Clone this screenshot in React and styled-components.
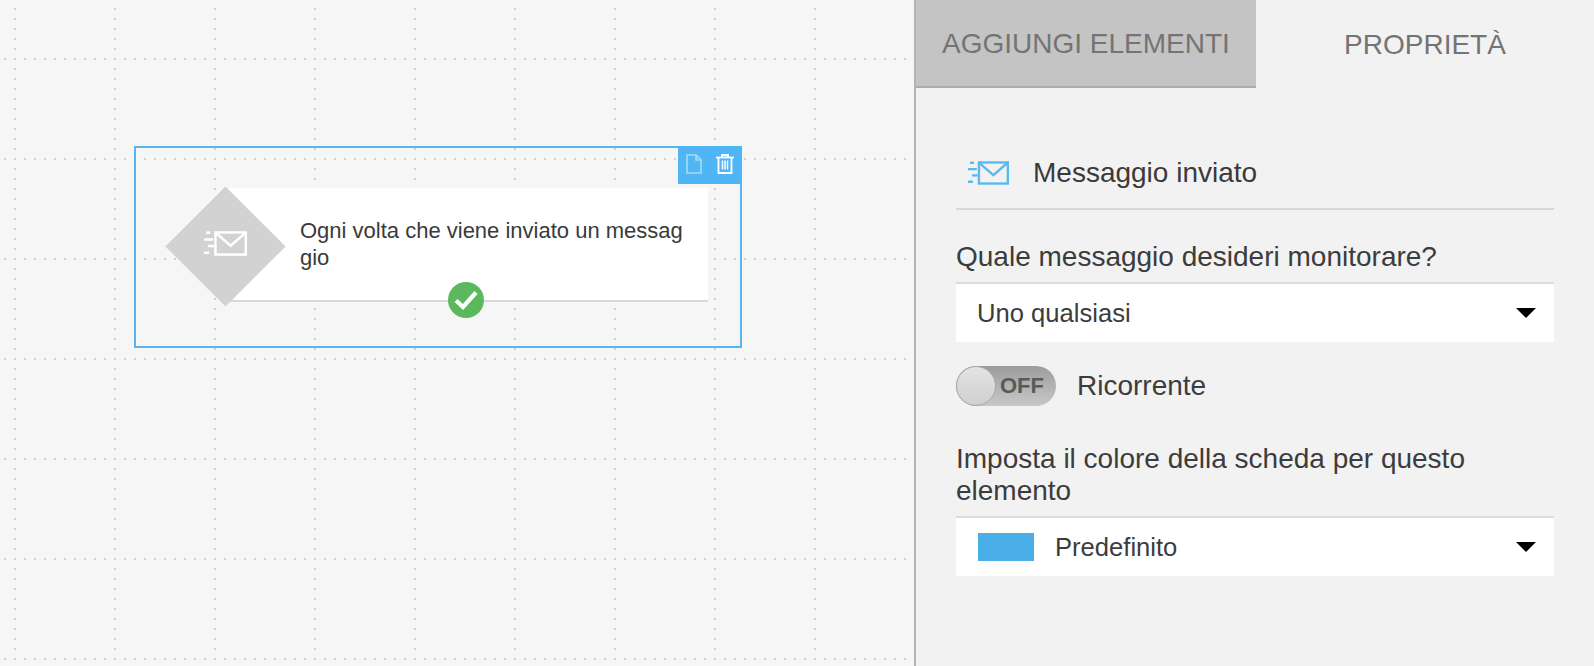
import React from 'react';
import styled, { createGlobalStyle } from 'styled-components';

const GlobalStyle = createGlobalStyle`
  html, body {
    margin: 0;
    padding: 0;
    height: 100%;
    overflow: hidden;
    font-family: "Liberation Sans", Arial, sans-serif;
    color: #3c3c3c;
  }
  #root {
    height: 100%;
  }
`;

const Page = styled.div`
  display: flex;
  height: 666px;
  width: 1594px;
`;

const Canvas = styled.div`
  position: relative;
  width: 914px;
  flex: none;
  background-color: #f6f6f6;
  overflow: hidden;
`;

// dotted grid: one set of bars every 100px, cut into dots by a 10px mask
const GridColumns = styled.div`
  position: absolute;
  inset: 0;
  background-image: repeating-linear-gradient(to right, transparent 0 14px, #d0d0d0 14px 16px, transparent 16px 100px);
  mask-image: repeating-linear-gradient(to bottom, transparent 0 8px, #000 8px 10px);
`;

const GridRows = styled.div`
  position: absolute;
  inset: 0;
  background-image: repeating-linear-gradient(to bottom, transparent 0 58px, #d0d0d0 58px 60px, transparent 60px 100px);
  background-position: 0 0;
  mask-image: repeating-linear-gradient(to right, transparent 0 4px, #000 4px 6px, transparent 6px 10px);
`;

const Node = styled.div`
  position: absolute;
  left: 134px;
  top: 146px;
  width: 608px;
  height: 202px;
  box-sizing: border-box;
  border: 2px solid #5ab4f0;
  padding: 40px 32px 0 92px;
`;

const NodeTools = styled.div`
  position: absolute;
  top: -2px;
  right: -2px;
  width: 64px;
  height: 38px;
  background-color: #4fb5f5;
  display: flex;
  align-items: center;
  justify-content: center;
  gap: 14px;
  padding-bottom: 2px;
  box-sizing: border-box;
`;

const Card = styled.div`
  position: relative;
  height: 114px;
  box-sizing: border-box;
  background-color: #fff;
  border-bottom: 2px solid #d8d8d8;
  padding: 29px 24px 0 72px;
  font-size: 22px;
  line-height: 27px;
  color: #3a3a3a;
  word-break: break-all;
`;

const Diamond = styled.div`
  position: absolute;
  left: -63px;
  top: -2px;
  width: 120px;
  height: 120px;
  display: flex;
  align-items: center;
  justify-content: center;
  &::before {
    content: '';
    position: absolute;
    inset: 17.5px;
    background-color: #d2d2d2;
    transform: rotate(45deg);
  }
  svg {
    position: relative;
    top: -3px;
  }
`;

const Check = styled.div`
  position: absolute;
  left: 220px;
  top: 94px;
  width: 36px;
  height: 36px;
  border-radius: 50%;
  background-color: #5cb85c;
  display: flex;
  align-items: center;
  justify-content: center;
`;

const Panel = styled.div`
  flex: 1;
  min-width: 0;
  background-color: #f2f2f2;
  border-left: 2px solid #b4b4b4;
`;

const Tabs = styled.div`
  display: flex;
  height: 88px;
`;

const Tab = styled.div`
  width: ${({ $active }) => ($active ? '340px' : '338px')};
  box-sizing: border-box;
  display: flex;
  align-items: center;
  justify-content: center;
  font-size: 28px;
  color: #747474;
  background-color: ${({ $active }) => ($active ? '#c4c4c4' : 'transparent')};
  border-bottom: ${({ $active }) => ($active ? '2px solid #aeaeae' : 'none')};
  padding-top: 2px;
`;

const Body = styled.div`
  padding: 47px 40px 0;
`;

const Header = styled.div`
  display: flex;
  align-items: center;
  gap: 24px;
  height: 75px;
  box-sizing: border-box;
  border-bottom: 2px solid #d8d8d8;
  padding: 3px 0 0 12px;
  font-size: 28px;
  color: #3a3a3a;
`;

const Label = styled.div`
  margin: ${({ $top }) => $top}px 0 ${({ $bottom }) => $bottom}px;
  font-size: 28px;
  line-height: 32px;
  color: #3c3c3c;
`;

const Select = styled.div`
  display: flex;
  align-items: center;
  height: 60px;
  box-sizing: border-box;
  background-color: #fff;
  border-top: 2px solid #dcdcdc;
  padding: 0 18px 0 21px;
  font-size: 25.6px;
  color: #3c3c3c;
`;

const SelectValue = styled.span`
  flex: 1;
`;

const Swatch = styled.span`
  width: 56px;
  height: 28px;
  margin: 0 21px 0 1px;
  background-color: #4aaee8;
`;

const Arrow = styled.span`
  width: 0;
  height: 0;
  border-left: 10px solid transparent;
  border-right: 10px solid transparent;
  border-top: 10px solid #000;
`;

const ToggleRow = styled.div`
  display: flex;
  align-items: center;
  gap: 21px;
  margin-top: 24px;
  font-size: 28px;
  color: #3c3c3c;
`;

const Toggle = styled.div`
  position: relative;
  width: 100px;
  height: 40px;
  box-sizing: border-box;
  border-radius: 20px;
  background: linear-gradient(to bottom, #9c9c9c, #c8c8c8);
  display: flex;
  align-items: center;
  justify-content: flex-end;
  padding-right: 12px;
  font-size: 22px;
  font-weight: 700;
  color: #5a5a5a;
`;

const Knob = styled.div`
  position: absolute;
  left: 0;
  top: 0;
  width: 38px;
  height: 38px;
  border: 1px solid #a8a8a8;
  border-radius: 50%;
  background: linear-gradient(to bottom, #e4e4e4, #cfcfcf);
`;

const MailIcon = ({ color, width, height }) => (
  <svg width={width} height={height} viewBox="0 0 42 24" fill="none" stroke={color} strokeWidth="2.4">
    <rect x="11.2" y="1.2" width="29.6" height="21.6" />
    <path d="M11 1.2l15 13 15-13" />
    <path d="M2 1.5h4M0 8h9M4 14.5h6M0 21h5" />
  </svg>
);

const DocIcon = () => (
  <svg width="16" height="20" viewBox="0 0 16 20" fill="none" stroke="#a9dcfb" strokeWidth="1.6">
    <path d="M1 1h9l5 5v13H1z" />
    <path d="M10 1v5h5" />
  </svg>
);

const TrashIcon = () => (
  <svg width="18" height="20" viewBox="0 0 18 20" fill="none" stroke="#fff" strokeWidth="1.8">
    <path d="M0 3.5h18" />
    <path d="M6 3V1h6v2" />
    <path d="M2.5 3.5V19h13V3.5" />
    <path d="M6.5 6.5v9M9 6.5v9M11.5 6.5v9" strokeWidth="1.5" />
  </svg>
);

const CheckIcon = () => (
  <svg width="24" height="20" viewBox="0 0 24 20" fill="none" stroke="#fff" strokeWidth="4.2">
    <path d="M2 10.5l7 6.5L22 2.5" />
  </svg>
);

export default function App() {
  return (
    <Page>
      <GlobalStyle />
      <Canvas>
        <GridColumns />
        <GridRows />
        <Node>
          <NodeTools>
            <DocIcon />
            <TrashIcon />
          </NodeTools>
          <Card>
            <Diamond>
              <MailIcon color="#fff" width={43} height={25} />
            </Diamond>
            Ogni volta che viene inviato un messaggio
            <Check>
              <CheckIcon />
            </Check>
          </Card>
        </Node>
      </Canvas>
      <Panel>
        <Tabs>
          <Tab $active>AGGIUNGI ELEMENTI</Tab>
          <Tab>PROPRIETÀ</Tab>
        </Tabs>
        <Body>
          <Header>
            <MailIcon color="#5ab8f0" width={41} height={24} />
            Messaggio inviato
          </Header>
          <Label $top={31} $bottom={9}>Quale messaggio desideri monitorare?</Label>
          <Select>
            <SelectValue>Uno qualsiasi</SelectValue>
            <Arrow />
          </Select>
          <ToggleRow>
            <Toggle>
              <Knob />
              OFF
            </Toggle>
            Ricorrente
          </ToggleRow>
          <Label $top={37} $bottom={9}>Imposta il colore della scheda per questo elemento</Label>
          <Select>
            <Swatch />
            <SelectValue>Predefinito</SelectValue>
            <Arrow />
          </Select>
        </Body>
      </Panel>
    </Page>
  );
}
